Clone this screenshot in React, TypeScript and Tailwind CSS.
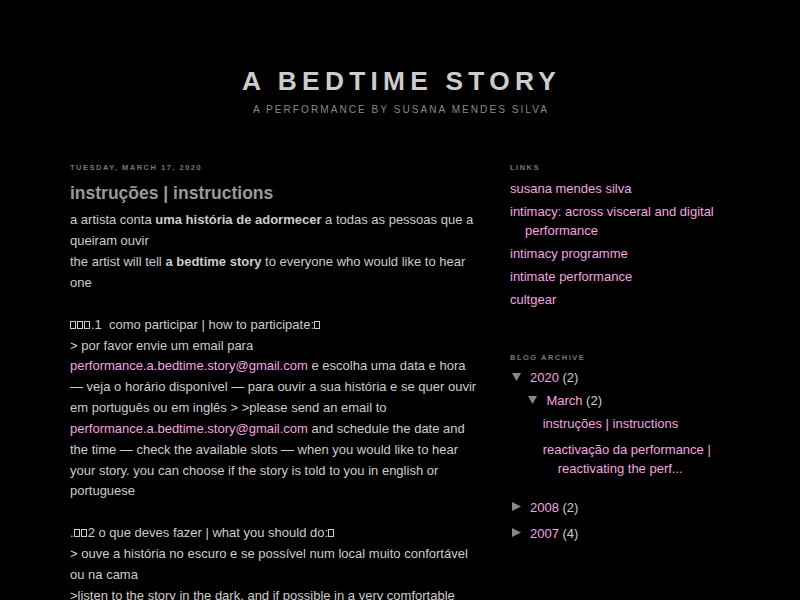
import React from "react";

const Tofu = () => (
  <span className="inline-block w-[6px] h-[8px] border border-[#ccc] mr-[1px] align-baseline" />
);

const Down = () => (
  <svg width="9" height="8" viewBox="0 0 9 8" className="inline-block align-[1px]">
    <polygon points="0,0 9,0 4.5,8" fill="#888" />
  </svg>
);

const Right = () => (
  <svg width="9" height="9" viewBox="0 0 9 9" className="inline-block align-[1px]">
    <polygon points="0,0 9,4.5 0,9" fill="#888" />
  </svg>
);

const Link = ({ children }: { children: React.ReactNode }) => (
  <a className="text-[#f5a3e0] no-underline cursor-pointer">{children}</a>
);

export default function App() {
  const email = "performance.a.bedtime.story@gmail.com";
  return (
    <div className="min-h-screen bg-black text-[#ccc] font-['Liberation_Sans',Arial,Helvetica,sans-serif] pt-[66px]">
      <header className="text-center">
        <h1 className="text-[26.3px] leading-[31.2px] font-bold tracking-[0.2em] text-[#ccc] uppercase pl-[3px]">
          A Bedtime Story
        </h1>
        <p className="mt-[7px] text-[10.1px] leading-[12px] tracking-[0.2em] text-[#888] uppercase pl-[2px]">
          A Performance by Susana Mendes Silva
        </p>
      </header>

      <div className="mx-auto w-[660px] mt-[47.2px] flex justify-between">
        <main className="w-[410px]">
          <h2 className="text-[7.5px] leading-[10px] font-bold uppercase tracking-[0.2em] text-[#777]">
            Tuesday, March 17, 2020
          </h2>
          <h3 className="mt-[7.2px] text-[17.5px] leading-[24.5px] font-bold text-[#999]">
            instruções | instructions
          </h3>
          <div className="mt-[5.4px] text-[13px] leading-[20.85px] text-[#ccc]">
            a artista conta <b>uma história de adormecer</b> a todas as pessoas que a queiram ouvir
            <br />
            the artist will tell <b>a bedtime story</b> to everyone who would like to hear one
            <br />
            <br />
            <Tofu />
            <Tofu />
            <Tofu />
            .1&nbsp; como participar | how to participate:
            <Tofu />
            <br />
            &gt; por favor envie um email para <Link>{email}</Link> e escolha uma data e hora — veja o
            horário disponível — para ouvir a sua história e se quer ouvir em português ou em inglês
            &gt; &gt;please send an email to <Link>{email}</Link> and schedule the date and the time —
            check the available slots — when you would like to hear your story. you can choose if the
            story is told to you in english or portuguese
            <br />
            <br />.
            <Tofu />
            <Tofu />2 o que deves fazer | what you should do:
            <Tofu />
            <br />
            &gt; ouve a história no escuro e se possível num local muito confortável ou na cama
            <br />
            &gt;listen to the story in the dark, and if possible in a very comfortable place or in
            your bed
          </div>
        </main>

        <aside className="w-[220px] text-[13px]">
          <h2 className="text-[7.5px] leading-[10px] font-bold uppercase tracking-[0.2em] text-[#777]">
            Links
          </h2>
          <ul className="mt-[5.7px]">
            {[
              "susana mendes silva",
              "intimacy: across visceral and digital performance",
              "intimacy programme",
              "intimate performance",
              "cultgear",
            ].map((t) => (
              <li key={t} className="pl-[15px] -indent-[15px] leading-[19.55px] pb-[3.25px]">
                <Link>{t}</Link>
              </li>
            ))}
          </ul>

          <h2 className="mt-[40.4px] text-[7.5px] leading-[10px] font-bold uppercase tracking-[0.2em] text-[#777]">
            Blog Archive
          </h2>
          <div className="mt-[5.3px] leading-[19.5px]">
            <div className="pl-[1.5px] pb-[3.25px]">
              <Down />
              <span className="ml-[9.5px]">
                <Link>2020</Link> (2)
              </span>
            </div>
            <div className="pl-[17.7px] pb-[3.8px]">
              <Down />
              <span className="ml-[9.7px]">
                <Link>March</Link> (2)
              </span>
            </div>
            <div className="pl-[47.7px] -indent-[15px] pb-[6.5px]">
              <Link>instruções | instructions</Link>
            </div>
            <div className="pl-[47.7px] -indent-[15px] leading-[19px] pb-[20px]">
              <Link>reactivação da performance | reactivating the perf...</Link>
            </div>
            <div className="pl-[2px] pb-[6.5px]">
              <Right />
              <span className="ml-[9px]">
                <Link>2008</Link> (2)
              </span>
            </div>
            <div className="pl-[2px] pb-[6.5px]">
              <Right />
              <span className="ml-[9px]">
                <Link>2007</Link> (4)
              </span>
            </div>
          </div>
        </aside>
      </div>
    </div>
  );
}
